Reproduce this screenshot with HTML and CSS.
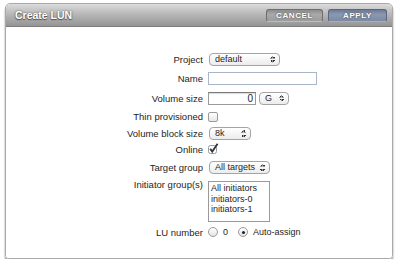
FILE: index.html
```html
<!DOCTYPE html>
<html lang="en">
<head>
  <meta charset="UTF-8" />
  <title>Create LUN</title>
  <link rel="stylesheet" href="styles.css">
</head>
<body>

<div class="dialog">
  <!-- Title bar with the two actions -->
  <div class="titlebar">
    <span class="title">Create LUN</span>
    <div class="actions">
      <button class="btn cancel">CANCEL</button>
      <button class="btn apply">APPLY</button>
    </div>
  </div>

  <div class="body">
    <div class="form">
      <label>Project</label>
      <div class="ctl"><span class="select w-project">default<i class="arrows"></i></span></div>

      <label>Name</label>
      <div class="ctl"><span class="text name"></span></div>

      <label>Volume size</label>
      <div class="ctl">
        <span class="text size">0</span>
        <span class="select w-unit">G<i class="arrows"></i></span>
      </div>

      <label>Thin provisioned</label>
      <div class="ctl"><span class="check"></span></div>

      <label>Volume block size</label>
      <div class="ctl"><span class="select w-block">8k<i class="arrows"></i></span></div>

      <label>Online</label>
      <div class="ctl">
        <svg class="checked" width="12" height="12" viewBox="0 0 12 12">
          <rect x="0.5" y="2.5" width="8" height="8" rx="2" fill="#fff" stroke="#9a9a9a"/>
          <path d="M2.2 5.8 L4.2 8.6 L9.6 0.8" fill="none" stroke="#2e3440" stroke-width="1.8"/>
        </svg>
      </div>

      <label>Target group</label>
      <div class="ctl"><span class="select w-target">All targets<i class="arrows"></i></span></div>

      <label class="top">Initiator group(s)</label>
      <div class="ctl top">
        <div class="listbox">
          <div>All initiators</div>
          <div>initiators-0</div>
          <div>initiators-1</div>
        </div>
      </div>

      <label>LU number</label>
      <div class="ctl">
        <span class="radio"></span><span class="opt">0</span>
        <span class="radio on"></span><span class="opt">Auto-assign</span>
      </div>
    </div>
  </div>
</div>

</body>
</html>
```

FILE: styles.css
```css
body {
  margin: 0;
  background: #fff;
  font-family: 'Liberation Sans', Arial, sans-serif;
  color: #1e1e1e;
}

/* Dialog frame */
.dialog {
  width: 386px;
  margin: 3px 0 0 5px;
  border: 1px solid #a9a9a9;
  border-radius: 5px 5px 4px 4px;
  box-shadow: 0 3px 2px rgba(0, 0, 0, 0.45);
  overflow: hidden;
}

.titlebar {
  height: 22px;
  display: flex;
  align-items: center;
  justify-content: space-between;
  padding: 0 5px 0 9px;
  background: linear-gradient(#dcdcdc, #b8b8b8 45%, #949494);
  border-bottom: 1px solid #7d7d7d;
}

.title {
  color: #fff;
  font-size: 10.5px;
  font-weight: bold;
  text-shadow: 0 0 2px #4a4a4a, 0 1px 1px #555;
}

.actions {
  display: flex;
  gap: 5px;
  margin-top: 1px;
}

.btn {
  height: 13px;
  padding: 0;
  border: 1px solid #6e6e6e;
  border-bottom-color: #bdbdbd;
  border-radius: 3px;
  color: #fff;
  font-family: 'Liberation Sans', Arial, sans-serif;
  font-size: 8px;
  font-weight: bold;
  letter-spacing: 0.6px;
  line-height: 11px;
  text-shadow: 0 0 2px #333;
}

.cancel {
  width: 57px;
  background: linear-gradient(#8c8c8c, #a9a9a9 40%, #9c9c9c);
}

.apply {
  width: 59px;
  border-color: #5c667a #5c667a #a6aebd;
  background: linear-gradient(#6c7a96, #8b98b2 40%, #7d8aa5);
}

.body {
  height: 231px;
  background: #fff;
  padding-top: 22px;
  box-sizing: border-box;
}

/* Label / control grid */
.form {
  display: grid;
  grid-template-columns: 197px 1fr;
  grid-template-rows: 20px 19px 20px 17px 17px 15px 21px 46px 16px;
  column-gap: 5px;
  font-size: 9.5px;
}

.form label {
  text-align: right;
  align-self: center;
  white-space: nowrap;
}

.form label.top {
  align-self: start;
  margin-top: 1px;
}

.ctl {
  display: flex;
  align-items: center;
}

.ctl.top {
  align-items: flex-start;
  padding-top: 3px;
}

.select {
  position: relative;
  height: 11px;
  margin-left: 1px;
  padding-left: 5px;
  border: 1px solid #a4a4a4;
  border-radius: 4px;
  background: linear-gradient(#ffffff, #ececec);
  font-size: 9px;
  line-height: 11px;
  box-sizing: content-box;
}

.arrows {
  position: absolute;
  right: 4px;
  top: 2px;
  width: 5px;
  height: 7px;
  background:
    linear-gradient(to bottom right, transparent 50%, #333 50%) left 0 / 2.5px 2.5px no-repeat,
    linear-gradient(to bottom left, transparent 50%, #333 50%) right 0 / 2.5px 2.5px no-repeat,
    linear-gradient(to top right, transparent 50%, #333 50%) left bottom / 2.5px 2.5px no-repeat,
    linear-gradient(to top left, transparent 50%, #333 50%) right bottom / 2.5px 2.5px no-repeat;
}

.w-project { width: 64px; }
.w-unit { width: 23px; margin-left: 3px; }
.w-block { width: 35px; }
.w-target { width: 54px; }

.text {
  height: 11px;
  border: 1px solid #9a9a9a;
  border-top-color: #7a7a7a;
  box-shadow: inset 0 1px 1px rgba(0, 0, 0, 0.15);
  font-size: 10px;
  line-height: 11px;
}

.name {
  width: 107px;
  border-color: #a9b6c8;
  box-shadow: none;
}

.size {
  width: 44px;
  padding-right: 2px;
  text-align: right;
}

.check {
  width: 8px;
  height: 8px;
  border: 1px solid #9a9a9a;
  border-radius: 2px;
  background: linear-gradient(#fff, #e6e6e6);
}

.checked {
  margin-top: -2px;
}

.listbox {
  width: 56px;
  height: 37px;
  padding: 1px 2px;
  border: 1px solid #9a9a9a;
  font-size: 9px;
  line-height: 10.5px;
}

.radio {
  width: 8px;
  height: 8px;
  border: 1px solid #9a9a9a;
  border-radius: 50%;
  background: linear-gradient(#fff, #e4e4e4);
  display: flex;
  align-items: center;
  justify-content: center;
}

.radio.on::after {
  content: "";
  width: 3px;
  height: 3px;
  border-radius: 50%;
  background: #222;
}

.opt {
  margin: 0 10px 0 5px;
  font-size: 9px;
}
```
